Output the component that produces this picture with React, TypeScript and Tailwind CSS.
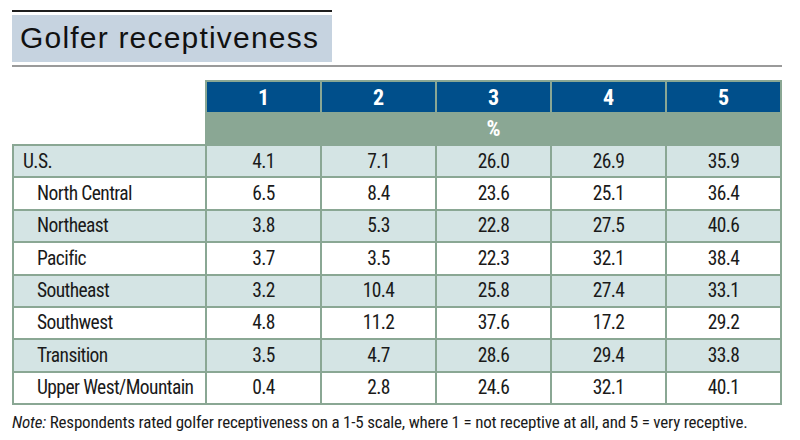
const regions = [
  { name: "U.S.", values: ["4.1", "7.1", "26.0", "26.9", "35.9"], top: true },
  { name: "North Central", values: ["6.5", "8.4", "23.6", "25.1", "36.4"] },
  { name: "Northeast", values: ["3.8", "5.3", "22.8", "27.5", "40.6"] },
  { name: "Pacific", values: ["3.7", "3.5", "22.3", "32.1", "38.4"] },
  { name: "Southeast", values: ["3.2", "10.4", "25.8", "27.4", "33.1"] },
  { name: "Southwest", values: ["4.8", "11.2", "37.6", "17.2", "29.2"] },
  { name: "Transition", values: ["3.5", "4.7", "28.6", "29.4", "33.8"] },
  { name: "Upper West/Mountain", values: ["0.4", "2.8", "24.6", "32.1", "40.1"] },
];

const narrow = "font-['Roboto_Condensed','Roboto',sans-serif]";

export default function App() {
  return (
    <div className="w-[800px] h-[440px] bg-white px-[12px] pt-[10px] text-[#1a1a1a]">
      {/* title */}
      <div className="w-[320px] border-t-[2px] border-[#1e1e1e] pt-[3px]">
        <div className="h-[47px] bg-[#c6d3e0] pl-[8px] pt-[5px] font-['Liberation_Sans',Arial,sans-serif] text-[30px] leading-[36px] tracking-[1.2px] text-[#111]">
          Golfer receptiveness
        </div>
      </div>
      <div className="mt-[3px] w-[770px] h-[2px] bg-[#9a9a9a]" />

      {/* header */}
      <div className={`mt-[13px] ml-[193px] w-[577px] bg-[#8aa794] px-[2px] pt-[2px] ${narrow}`}>
        <div className="grid grid-cols-5 gap-[2px]">
          {["1", "2", "3", "4", "5"].map(h => (
            <div key={h} className="h-[30px] bg-[#004f8b] flex items-center justify-center text-white font-bold text-[22px]">
              {h}
            </div>
          ))}
        </div>
        <div className="grid grid-cols-5 h-[32px]">
          <div />
          <div />
          <div className="flex items-center justify-center text-white font-bold text-[22px]">%</div>
        </div>
      </div>

      {/* body */}
      <div
        className={`grid w-[770px] grid-cols-[191px_repeat(5,113px)] grid-rows-[repeat(8,1fr)] gap-[2px] p-[2px] h-[261px] bg-[#8aa794] ${narrow} text-[19.5px] tracking-[-0.6px]`}
      >
        {regions.map((r, i) => {
          const bg = i % 2 === 0 ? "bg-[#d4e4e4]" : "bg-white";
          return [
            <div key={r.name} className={`${bg} flex items-center ${r.top ? "pl-[9px]" : "pl-[23px]"}`}>
              {r.name}
            </div>,
            ...r.values.map((v, j) => (
              <div key={r.name + j} className={`${bg} flex items-center justify-center`}>
                {v}
              </div>
            )),
          ];
        })}
      </div>

      <p className={`mt-[6px] ${narrow} text-[17px] leading-[22px] tracking-[-0.2px] whitespace-nowrap`}>
        <i>Note:</i> Respondents rated golfer receptiveness on a 1-5 scale, where 1 = not receptive at all, and 5 = very
        receptive.
      </p>
    </div>
  );
}
